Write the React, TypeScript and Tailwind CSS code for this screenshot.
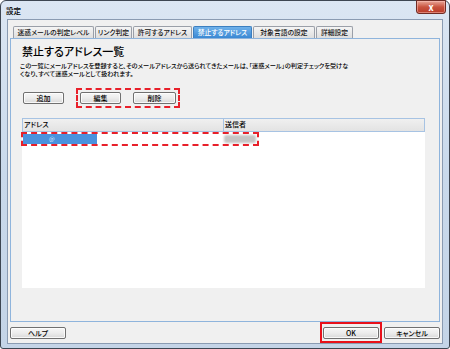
import React from "react";

const btn =
  "h-[12px] flex items-center justify-center rounded-[2px] border border-[#707070] bg-linear-to-b from-[#f7f7f7] via-[#ececec] to-[#d9d9d9] text-[7px] font-medium leading-none text-black shadow-[inset_0_0_0_1px_rgba(255,255,255,0.8)]";

const tabBase =
  "h-[12px] flex items-center justify-center rounded-t-[2px] border border-b-0 text-[6.8px] font-medium leading-none whitespace-nowrap";

export default function App() {
  const tabs = [
    { label: "迷惑メールの判定レベル", w: "w-[81px]" },
    { label: "リンク判定", w: "w-[37px]" },
    { label: "許可するアドレス", w: "w-[59px]" },
    { label: "禁止するアドレス", w: "w-[59px]", active: true },
    { label: "対象言語の設定", w: "w-[62px]" },
    { label: "詳細設定", w: "w-[37px]" },
  ];
  return (
    <div className="w-[450px] h-[349px] overflow-hidden bg-white font-['Noto_Sans_CJK_JP',sans-serif] [font-feature-settings:'palt']">
      <div className="w-full h-full flex flex-col rounded-t-[6px] rounded-b-[3px] border border-[#3d4652] bg-linear-to-b from-[#dbe6f3] via-[#c9d9eb] to-[#c4d4e7]">
        {/* Title bar */}
        <div className="h-[18px] shrink-0 flex justify-between">
          <span className="pl-[5px] pt-[5px] text-[7.5px] font-medium leading-[9px] text-black">設定</span>
          <div className="w-[30px] h-[14px] mr-[3px] -mt-px rounded-b-[3px] border border-[#6e2b24] bg-linear-to-b from-[#e8a598] via-[#c9533f] to-[#b83a28] flex items-center justify-center text-white text-[9px] font-bold leading-none shadow-[inset_0_0_0_1px_rgba(255,200,190,0.5)]">
            x
          </div>
        </div>
        {/* Client area */}
        <div className="mx-[6px] mb-[4px] flex-1 flex flex-col border border-[#8a9bb2] bg-[#f0f0f0] pt-[6px] px-[2px] pb-[4px]">
          {/* Tabs */}
          <div className="h-[12px] flex items-end gap-[1px] pl-[3px]">
            {tabs.map((t) =>
              t.active ? (
                <div
                  key={t.label}
                  className={`${tabBase} ${t.w} border-[#3c7fc0] bg-linear-to-b from-[#6fb1ea] to-[#3a88d3] text-white`}
                >
                  {t.label}
                </div>
              ) : (
                <div
                  key={t.label}
                  className={`${tabBase} ${t.w} border-[#9a9fa8] bg-linear-to-b from-[#f5f5f5] to-[#dedede] text-[#111]`}
                >
                  {t.label}
                </div>
              )
            )}
          </div>
          {/* Panel */}
          <div className="flex-1 flex flex-col border border-[#8fb4dc] bg-[#f0f0f0] pl-[9px] pr-[14px] pt-[6px] pb-[33px]">
            <div className="pl-[2px] text-[11px] font-medium leading-[13px] text-black">禁止するアドレス一覧</div>
            <div className="mt-[4px] text-[6.2px] font-medium leading-[7.5px] text-black whitespace-nowrap">
              この一覧にメールアドレスを登録すると、そのメールアドレスから送られてきたメールは、「迷惑メール」の判定チェックを受けな
              <br />
              くなり、すべて迷惑メールとして扱われます。
            </div>
            <div className="mt-[11px] h-[20px] flex items-center">
              <div className={`${btn} ml-[3px] w-[41px] border-[#3c7fb1] shadow-[inset_0_0_0_1px_#9fd3f5]`}>追加</div>
              <div className="ml-[12px] w-[104px] h-[20px] border-2 border-dashed border-[#e8202a] flex items-center pl-[2px] pr-[2px] gap-[12px]">
                <div className={`${btn} w-[41px]`}>編集</div>
                <div className={`${btn} w-[43px]`}>削除</div>
              </div>
            </div>
            {/* List */}
            <div className="mt-[10px] ml-[2px] flex-1 flex flex-col bg-white">
              <div className="h-[14px] flex bg-linear-to-b from-[#f0f0f0] to-[#e3e3e3] border border-[#a7c3e3] text-[7px] font-medium leading-none text-black">
                <div className="w-[201px] border-r border-[#a7c3e3] pl-[1px] pt-[2px]">アドレス</div>
                <div className="flex-1 pl-[1px] pt-[2px]">送信者</div>
              </div>
              <div className="relative h-[11px] mt-[1px] flex items-center">
                <div className="ml-[1px] w-[74px] h-[10px] bg-[#4a92de] text-[#dcecff] text-[6px] leading-[10px] pl-[26px]">@</div>
                <div className="ml-[127px] w-[32px] h-[8px] bg-[#c4c4c4] blur-[1px] rounded-[2px]" />
                <div className="absolute left-[-1px] top-[-1px] w-[238px] h-[14px] border-2 border-dashed border-[#e8202a]" />
              </div>
            </div>
          </div>
          {/* Bottom buttons */}
          <div className="mt-[5px] h-[12px] flex items-center justify-between">
            <div className={`${btn} w-[56px]`}>ヘルプ</div>
            <div className="flex gap-[5px]">
              <div className="relative">
                <div className={`${btn} w-[56px]`}>OK</div>
                <div className="absolute left-[-3px] top-[-5px] w-[62px] h-[21px] border-2 border-[#e8101a]" />
              </div>
              <div className={`${btn} w-[56px]`}>キャンセル</div>
            </div>
          </div>
        </div>
      </div>
    </div>
  );
}
